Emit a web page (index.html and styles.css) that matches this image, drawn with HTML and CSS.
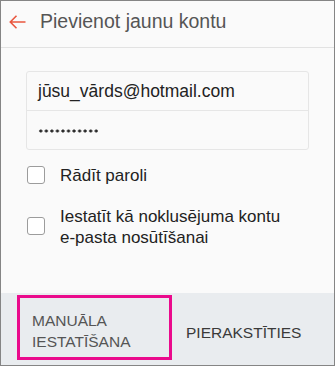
FILE: index.html
```html
<!DOCTYPE html>
<html lang="lv">
<head>
<meta charset="utf-8">
<link rel="stylesheet" href="styles.css">
</head>
<body>
<div class="screen">
  <header class="topbar">
    <svg class="back" width="17" height="14" viewBox="0 0 17 14" aria-hidden="true">
      <path d="M16.5 7H1.5M7.5 0.8L1.3 7l6.2 6.2" fill="none" stroke="#e9573f" stroke-width="1.6"/>
    </svg>
    <h1 class="title">Pievienot jaunu kontu</h1>
  </header>
  <main class="content">
    <div class="fields">
      <div class="field">jūsu_vārds@hotmail.com</div>
      <div class="field"><span class="dots" role="img" aria-label="•••••••••••"></span></div>
    </div>
    <label class="check first">
      <span class="box"></span>
      <span class="label">Rādīt paroli</span>
    </label>
    <label class="check second">
      <span class="box"></span>
      <span class="label">Iestatīt kā noklusējuma kontu<br>e-pasta nosūtīšanai</span>
    </label>
  </main>
  <footer class="actions">
    <div class="btn manual">MANUĀLA<br>IESTATĪŠANA</div>
    <div class="btn signin">PIERAKSTĪTIES</div>
  </footer>
</div>
</body>
</html>
```
FILE: styles.css
```css
html, body {
  margin: 0;
  padding: 0;
}
body {
  font-family: "Liberation Sans", Arial, sans-serif;
  background: #fafafa;
}
.screen {
  box-sizing: border-box;
  width: 335px;
  height: 366px;
  border: 1px solid #858585;
  background: #fafafa;
  display: flex;
  flex-direction: column;
  overflow: hidden;
}
.topbar {
  box-sizing: border-box;
  height: 47px;
  border-bottom: 1px solid #e2e2e2;
  display: flex;
  align-items: center;
  padding: 0 0 5px 8px;
}
.back {
  display: block;
}
.title {
  margin: 0 0 0 14px;
  font-size: 19.5px;
  font-weight: normal;
  color: #555;
}
.content {
  flex: 1;
  padding: 23px 25px 0 25px;
}
.fields {
  border: 1px solid #e6e6e6;
  border-radius: 3px;
  width: 281px;
}
.field {
  box-sizing: border-box;
  height: 38px;
  line-height: 33px;
  padding-left: 11px;
  font-size: 17.5px;
  color: #222;
  display: flex;
  align-items: center;
}
.field + .field {
  border-top: 1px solid #e6e6e6;
  height: 39px;
}
.dots {
  display: block;
  width: 60px;
  height: 4px;
  background-image: radial-gradient(circle at center, #2a2a2a 1.3px, transparent 1.8px);
  background-size: 5.55px 4px;
  background-repeat: repeat-x;
  margin-top: 1px;
}
.check {
  display: flex;
  align-items: center;
  gap: 15px;
  padding-left: 1px;
  font-size: 17px;
  color: #222;
  line-height: 21px;
}
.check.first {
  margin-top: 15px;
}
.check.second {
  margin-top: 20px;
}
.box {
  box-sizing: border-box;
  width: 18px;
  height: 18px;
  border: 1.5px solid #9c9c9c;
  border-radius: 3px;
  background: #fff;
  flex: none;
  margin-bottom: 2px;
}
.actions {
  height: 72px;
  background: #e9ecef;
  display: flex;
  align-items: center;
  padding-left: 16px;
  gap: 14px;
}
.btn {
  font-size: 15.5px;
  color: #3a3a3a;
  line-height: 21px;
}
.manual {
  box-sizing: border-box;
  width: 155px;
  height: 65px;
  border: 3px solid #ea0a8c;
  padding: 12px 0 0 12px;
  color: #555;
  align-self: flex-start;
  margin-top: 2px;
}
.signin {
  padding-top: 6px;
}
```
